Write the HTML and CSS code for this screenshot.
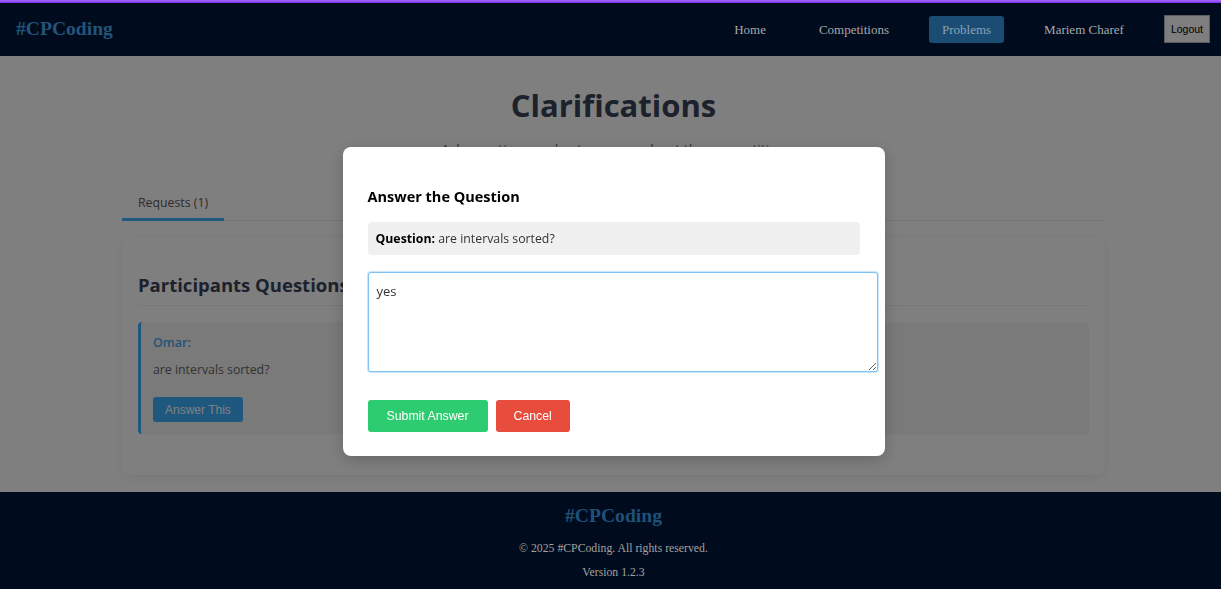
FILE: index.html
```html
<!DOCTYPE html>
<html lang="en">
<head>
<meta charset="utf-8">
<title>Clarifications</title>
<link rel="stylesheet" href="styles.css">
</head>
<body>
<div class="topline"></div>
<header class="navbar">
  <div class="logo">#CPCoding</div>
  <nav class="nav">
    <a class="nav-link">Home</a>
    <a class="nav-link">Competitions</a>
    <a class="nav-link active">Problems</a>
    <a class="nav-link">Mariem Charef</a>
    <button class="logout">Logout</button>
  </nav>
</header>

<main class="page">
  <div class="container">
    <h1 class="title">Clarifications</h1>
    <p class="subtitle">Ask questions and get answers about the competition</p>
    <div class="tabs">
      <div class="tab">Requests (1)</div>
    </div>
    <section class="card">
      <h2 class="card-title">Participants Questions</h2>
      <div class="question-item">
        <div class="author">Omar:</div>
        <div class="qtext">are intervals sorted?</div>
        <button class="answer-btn">Answer This</button>
      </div>
    </section>
  </div>
</main>

<footer class="footer">
  <div class="footer-logo">#CPCoding</div>
  <p class="copy">© 2025 #CPCoding. All rights reserved.</p>
  <p class="version">Version 1.2.3</p>
</footer>

<div class="overlay">
  <div class="modal">
    <h3 class="modal-title">Answer the Question</h3>
    <div class="question-box"><strong>Question:</strong> are intervals sorted?</div>
    <textarea class="answer-input">yes</textarea>
    <div class="modal-actions">
      <button class="btn btn-submit">Submit Answer</button>
      <button class="btn btn-cancel">Cancel</button>
    </div>
  </div>
</div>
</body>
</html>
```

FILE: styles.css
```css
* { box-sizing: border-box; }
html, body { margin: 0; padding: 0; }
body {
  background: #ffffff;
  font-family: "Open Sans", "Noto Sans", sans-serif;
  height: 589px;
  overflow: hidden;
}

.topline {
  height: 3px;
  background: linear-gradient(#a46cf6, #7c2ff0);
  position: relative;
  z-index: 20;
}

.navbar {
  position: relative;
  z-index: 20;
  height: 53px;
  background: #000c1e;
  display: flex;
  align-items: center;
  justify-content: space-between;
  padding: 0 11px 1px 16px;
  font-family: "Liberation Serif", "Times New Roman", serif;
}
.logo {
  font-size: 19.6px;
  font-weight: bold;
  color: #235478;
}
.nav {
  display: flex;
  align-items: center;
  gap: 27px;
}
.nav-link {
  font-size: 13px;
  color: #a8a8a8;
  padding: 0 13px;
  height: 27px;
  line-height: 27px;
  border-radius: 3px;
}
.nav-link.active {
  background: #1b4c74;
  color: #8ea2b2;
}
.logout {
  font-family: "Liberation Sans", Arial, sans-serif;
  font-size: 10.5px;
  color: #000;
  background: #7e7e7e;
  border: 1px solid #5c5c5c;
  height: 28px;
  padding: 0 6px;
  border-radius: 0;
}

.page {
  height: 436px;
  padding: 27px 116px 17px 122px;
}
.container { width: 983px; }
.title {
  margin: 0;
  text-align: center;
  font-size: 31px;
  line-height: 44px;
  font-weight: 700;
  color: #384256;
}
.subtitle {
  margin: 11px 0 0;
  text-align: center;
  font-size: 13.8px;
  line-height: 24px;
  color: #6a6a6a;
}
.tabs {
  margin-top: 21px;
  display: flex;
  border-bottom: 1px solid #eaeaea;
}
.tab {
  padding: 10px 16px 5px;
  font-size: 12.3px;
  line-height: 20px;
  color: #5a5a5a;
  border-bottom: 3px solid #3cb0ff;
  margin-bottom: -1px;
}
.card {
  margin-top: 17px;
  background: #fff;
  border-radius: 8px;
  box-shadow: 0 2px 10px rgba(0, 0, 0, 0.08);
  padding: 20px 16px 41px;
}
.card-title {
  margin: 13px 0 0;
  font-size: 18.5px;
  line-height: 28px;
  font-weight: 700;
  color: #384256;
  padding-bottom: 6px;
  border-bottom: 1px solid #efefef;
}
.question-item {
  margin-top: 16px;
  background: #f4f4f4;
  border-left: 3px solid #3cb0ff;
  border-radius: 4px;
  padding: 11px 12px 12px;
}
.author {
  font-size: 12.5px;
  line-height: 20px;
  font-weight: 600;
  color: #4aa8ea;
}
.qtext {
  margin-top: 7px;
  font-size: 12.3px;
  line-height: 20px;
  color: #666;
}
.answer-btn {
  margin-top: 17px;
  display: block;
  height: 25px;
  padding: 0 12px;
  border: none;
  border-radius: 3px;
  background: #3cb0ff;
  color: #fff;
  font-family: "Liberation Sans", Arial, sans-serif;
  font-size: 12px;
}

.footer {
  position: relative;
  z-index: 20;
  height: 97px;
  background: #000c1e;
  text-align: center;
  padding: 12px 0 0 6px;
  font-family: "Liberation Serif", "Times New Roman", serif;
}
.footer-logo {
  font-size: 19.6px;
  line-height: 24px;
  font-weight: bold;
  color: #1f5079;
}
.copy {
  margin: 13px 0 0;
  font-size: 11.75px;
  line-height: 16px;
  color: #a2a2a2;
}
.version {
  margin: 8px 0 0;
  font-size: 11.75px;
  line-height: 16px;
  color: #a2a2a2;
}

.overlay {
  position: fixed;
  inset: 0;
  z-index: 10;
  background: rgba(0, 0, 0, 0.5);
  display: flex;
  justify-content: center;
  align-items: flex-start;
  padding: 147px 0 0 6px;
}
.modal {
  width: 542px;
  background: #fff;
  border-radius: 8px;
  padding: 25px 25px 24px;
  box-shadow: 0 4px 16px rgba(0, 0, 0, 0.2);
}
.modal-title {
  margin: 15px 0 15px;
  font-size: 14.5px;
  line-height: 20px;
  font-weight: 700;
  color: #000;
}
.question-box {
  background: #f0f0f0;
  border-radius: 4px;
  padding: 8px;
  font-size: 12.3px;
  line-height: 17px;
  color: #333;
}
.question-box strong { color: #000; }
.answer-input {
  display: block;
  box-sizing: content-box;
  width: 100%;
  height: 82px;
  margin-top: 17px;
  padding: 8px;
  border: 1px solid #7cc2f2;
  border-radius: 3px;
  box-shadow: 0 0 0 1px rgba(140, 200, 245, 0.45);
  outline: none;
  font-family: "Open Sans", "Noto Sans", sans-serif;
  font-size: 13px;
  line-height: 20px;
  color: #333;
  resize: both;
}
.modal-actions {
  margin-top: 28px;
  display: flex;
  gap: 8px;
}
.btn {
  height: 32px;
  padding: 0 19px;
  border: none;
  border-radius: 3px;
  color: #fff;
  font-family: "Liberation Sans", Arial, sans-serif;
  font-size: 12.3px;
}
.btn-submit { background: #2ecc71; }
.btn-cancel { background: #e74c3c; padding: 0 18px; }
```
